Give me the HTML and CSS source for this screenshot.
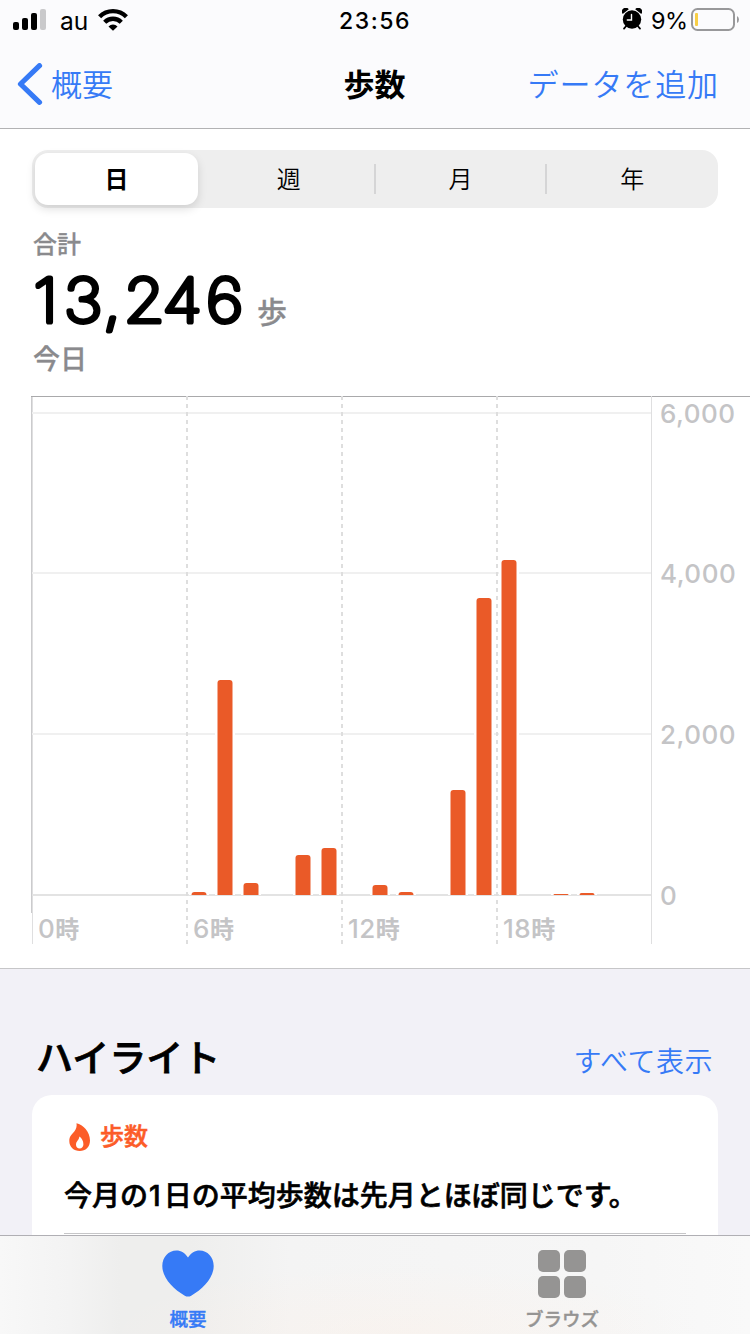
FILE: index.html
```
<!DOCTYPE html>
<html lang="ja">
<head>
    <meta charset="UTF-8">
    <title>歩数</title>
    <link rel="stylesheet" href="styles.css">
</head>
<body>
<div class="header">
    <div class="status">
        <div class="status-left">
            <svg class="signal" width="34" height="22" viewBox="0 0 34 22">
                <rect x="0" y="14" width="6" height="8" rx="2"/>
                <rect x="9" y="10" width="6" height="12" rx="2"/>
                <rect x="18" y="5" width="6" height="17" rx="2"/>
                <rect x="27" y="1" width="6" height="21" rx="2" fill="#c9c9cb"/>
            </svg>
            <span class="carrier">au</span>
            <svg class="wifi" width="30" height="23" viewBox="0 0 30 23">
                <g fill="none" stroke="#000" stroke-width="4.400">
                    <path d="M1.600 8.700a19 19 0 0 1 26.800 0"/>
                    <path d="M6.700 14.200a11.800 11.800 0 0 1 16.600 0"/>
                </g>
                <path d="M10.500 18.400a6.400 6.400 0 0 1 9 0L15 22.800z"/>
            </svg>
        </div>
        <span class="time">23:56</span>
        <div class="status-right">
            <svg class="alarm" width="20" height="22" viewBox="0 0 20 22">
                <circle cx="10" cy="11.500" r="9.200"/>
                <path d="M.7 6A3.800 3.800 0 0 1 6.800 1.300zM19.300 6A3.800 3.800 0 0 0 13.200 1.300z"/>
                <path d="M4.2 18L2 20.6M15.800 18l2.200 2.600" stroke="#000" stroke-width="1.8" stroke-linecap="round"/>
                <path d="M9.500 6.500v5.500H5.300" fill="none" stroke="#fff" stroke-width="1.4" stroke-linecap="round"/>
            </svg>
            <span class="percent">9%</span>
            <svg class="battery" width="48" height="24" viewBox="0 0 48 24">
                <rect x="1" y="1" width="42" height="21" rx="5.5" fill="none" stroke="#98989a" stroke-width="2"/>
                <rect x="4" y="5" width="3" height="13" rx="1" fill="#f8ce46"/>
                <path d="M46 8q2 1 2 3.500t-2 3.500z" fill="#98989a"/>
            </svg>
        </div>
    </div>
    <div class="nav">
        <a class="back" href="javascript:;">
            <svg width="26" height="42" viewBox="0 0 26 42">
                <path d="M22.500 2.700L3.500 21l19 18.300" fill="none" stroke="#367af6" stroke-width="5.200" stroke-linecap="round" stroke-linejoin="round"/>
            </svg>
            <span>概要</span>
        </a>
        <h1>歩数</h1>
        <a class="add" href="javascript:;">データを追加</a>
    </div>
</div>

<div class="panel">
    <ul class="tabs">
        <li class="active">日</li>
        <li>週</li>
        <li>月</li>
        <li>年</li>
    </ul>
    <div class="total">
        <p class="label">合計</p>
        <div class="value">
            <svg width="225" height="77" viewBox="33 262 225 77">
                <text transform="scale(1.1 1)" x="30.5 58.200 93.800 112.400 147.800 187.300" y="322.500">13,246</text>
            </svg>
            <span>歩</span>
        </div>
        <p class="date">今日</p>
    </div>
    <svg class="chart" width="750" height="548" viewBox="0 396 750 548">
        <path class="edge" d="M31 396.500H750"/>
        <path class="side" d="M31.500 397V913"/>
        <path class="line" d="M32.500 397V944M651.500 396V944"/>
        <path class="grid" d="M32 413H651M32 573H651M32 734H651"/>
        <path class="base" d="M32 895H651"/>
        <path class="dash" d="M187 396V944M342 396V944M497 396V944"/>
        <g id="bars"></g>
        <g class="axis">
            <text x="660" y="423">6,000</text>
            <text x="660" y="583">4,000</text>
            <text x="660" y="744">2,000</text>
            <text x="660" y="905">0</text>
            <text x="38" y="938">0<tspan>時</tspan></text>
            <text x="193" y="938">6<tspan>時</tspan></text>
            <text x="348" y="938">12<tspan>時</tspan></text>
            <text x="503" y="938">18<tspan>時</tspan></text>
        </g>
    </svg>
</div>

<div class="highlight">
    <div class="highlight-head">
        <h2>ハイライト</h2>
        <a href="javascript:;">すべて表示</a>
    </div>
    <div class="card">
        <div class="card-title">
            <svg width="22" height="28" viewBox="0 0 22 28">
                <path fill="#fc5c28" fill-rule="evenodd" d="M7.500.2C14 1.500 21 8.500 21 17.500 21 24 16.500 28 10.800 28 4.800 28 .3 24 .3 18 .3 13 3 11.500 5.300 8.500 7.300 6 8 3.200 7.500.2zM10.300 13.500C10.300 17 7 18 7 21.700c0 2.300 1.600 3.800 3.600 3.800 2.300 0 3.800-1.700 3.800-4.200 0-3.500-1.700-6.300-4.100-7.800z"/>
            </svg>
            <span>歩数</span>
        </div>
        <p>今月の<span>1</span>日の平均歩数は先月とほぼ同じです。</p>
    </div>
</div>

<div class="footer">
    <a class="on" href="javascript:;">
        <svg width="52" height="48" viewBox="0 0 52 48">
            <path fill="#367af6" d="M26 7.500C23 3 19 .5 14.500.5 6.500.5.300 7 .300 16c0 12 11 23 22.500 29.700 2 1.200 4.400 1.200 6.400 0C40.700 39 51.700 28 51.700 16 51.700 7 45.500.5 37.500.5 33 .5 29 3 26 7.500z"/>
        </svg>
        <span>概要</span>
    </a>
    <a href="javascript:;">
        <svg width="48" height="48" viewBox="0 0 48 48" fill="#959493">
            <rect width="22" height="22" rx="5"/>
            <rect x="26" width="22" height="22" rx="5"/>
            <rect y="26" width="22" height="22" rx="5"/>
            <rect x="26" y="26" width="22" height="22" rx="5"/>
        </svg>
        <span>ブラウズ</span>
    </a>
</div>

<script type="text/javascript">
    //棒グラフ: [左端, 高さ]
    var data = [[191.5, 3], [217.5, 215], [243.5, 12], [295.5, 40], [321.5, 47], [372.5, 10], [398.5, 3],
        [450.5, 105], [476.5, 297], [501.5, 335], [553.5, 1], [579.5, 2]];
    var bars = document.getElementById("bars"), gap = "", bar = "";

    for (var i = 0; i < data.length; i++) {
        var x = data[i][0], h = data[i][1], y = 895 - h, r = Math.min(3, h);
        //棒の両側は目盛り線を白く抜く
        gap += '<rect class="gap" x="' + (x - 2.5) + '" y="' + (y - 2) + '" width="20" height="' + (h + 2) + '"/>';
        bar += '<path class="bar" d="M' + x + ' 895V' + (y + r) + 'q0 ' + -r + ' ' + r + ' ' + -r +
            'h' + (15 - 2 * r) + 'q' + r + ' 0 ' + r + ' ' + r + 'V895z"/>';
    }
    bars.innerHTML = gap + bar;
</script>
</body>
</html>
```
FILE: styles.css
```
body, div, ul, li, h1, h2, p {
    margin: 0;
    padding: 0;
}

html, body {
    width: 750px;
    height: 1334px;
    overflow: hidden;
}

body {
    display: flex;
    flex-direction: column;
    font-family: Inter, "Noto Sans CJK JP", sans-serif;
    color: #000;
    background: #f2f1f7;
}

a {
    text-decoration: none;
    color: #367af6;
}

li {
    list-style: none;
}

svg {
    display: block;
    flex: none;
}

.header {
    flex: none;
    height: 128px;
    border-bottom: 1px solid #b2b2b4;
    background: #fbfbfd;
}

.status {
    display: grid;
    grid-template-columns: 1fr auto 1fr;
    height: 40px;
    line-height: 42px;
    font-size: 24px;
}

.status-left, .status-right {
    display: flex;
}

.status-left {
    padding-left: 13px;
}

.signal {
    margin-top: 8px;
}

.carrier {
    margin-left: 13px;
    width: 38px;
    font-size: 24.5px;
}

.wifi {
    margin-top: 8px;
}

.time {
    font-weight: 500;
    font-size: 23px;
    letter-spacing: 1.5px;
}

.status-right {
    justify-content: flex-end;
    padding-right: 11px;
}

.alarm {
    margin: 8px 9px 0 0;
}

.percent {
    width: 40px;
    font-size: 23.5px;
    letter-spacing: -.5px;
}

.battery {
    margin-top: 8px;
}

.nav {
    display: grid;
    grid-template-columns: 1fr auto 1fr;
    align-items: center;
    height: 88px;
    padding: 0 32px 0 17px;
    font-size: 31px;
    line-height: 46px;
    font-weight: 350;
}

.back {
    display: flex;
    align-items: center;
    gap: 8px;
}

.back span, .nav h1, .add {
    padding-top: 2px;
}

.nav h1 {
    font-size: 31px;
    font-weight: 700;
    padding-left: 14px;
}

.add {
    text-align: right;
    letter-spacing: .9px;
    margin-right: -1px;
}

.panel {
    flex: none;
    height: 839px;
    border-bottom: 1px solid #c6c6c8;
    background: #fff;
}

.tabs {
    display: flex;
    height: 52px;
    margin: 21px 32px 0;
    padding: 3px 0 3px 3px;
    border-radius: 16px;
    background: #eee;
}

.tabs li {
    flex: 1;
    position: relative;
    line-height: 54px;
    font-size: 24px;
    font-weight: 350;
    text-align: center;
}

.tabs .active {
    flex: 0 0 163px;
    height: 52px;
    margin-right: 5px;
    border-radius: 13px;
    font-weight: 700;
    background: #fff;
    box-shadow: 0 4px 10px rgba(0, 0, 0, .13);
}

.tabs li:nth-child(n+3):before {
    content: "";
    position: absolute;
    left: -1px;
    top: 11px;
    width: 2px;
    height: 30px;
    background: #d5d5d6;
}

.total {
    height: 188px;
    padding-left: 33px;
    color: #8a8a8d;
    font-weight: 500;
    -webkit-text-stroke: .3px #8a8a8d;
}

.label {
    padding-top: 20px;
    font-size: 24px;
    line-height: 34px;
}

.value {
    display: flex;
    height: 77px;
}

/* 細字を丸い線で太らせて角を丸くする */
.value text {
    font-size: 60px;
    font-weight: 100;
    -webkit-text-stroke: 0;
    fill: #000;
    stroke: #000;
    stroke-width: 5.1px;
    stroke-linejoin: round;
}

.value span {
    padding-top: 12px;
    margin-left: -1px;
    font-size: 30px;
    line-height: 77px;
}

.date {
    padding-top: 1px;
    font-size: 27px;
    line-height: 40px;
}

.chart path {
    fill: none;
}

.chart .edge {
    stroke: #a9a9ab;
}

.chart .side {
    stroke: #cbcbcd;
}

.chart .line {
    stroke: #dfdfe0;
}

.chart .grid {
    stroke: #f0f0f0;
    stroke-width: 2;
}

.chart .base {
    stroke: #e3e3e3;
    stroke-width: 2;
}

.chart .dash {
    stroke: #dedede;
    stroke-width: 2;
    stroke-dasharray: 4;
}

.chart .gap {
    fill: #fff;
}

.chart .bar {
    fill: #ea5a28;
}

.axis text {
    fill: #c4c4c6;
    font-size: 26px;
    font-weight: 500;
    letter-spacing: .5px;
}

.axis tspan {
    font-size: 24px;
    font-weight: 700;
}

.highlight {
    flex: 1;
    overflow: hidden;
    padding: 0 32px;
}

.highlight-head {
    display: flex;
    justify-content: space-between;
    align-items: baseline;
    height: 68px;
    padding: 58px 5px 0 4px;
}

.highlight-head h2 {
    font-size: 37px;
    line-height: 64px;
    font-weight: 500;
    -webkit-text-stroke: .8px #000;
}

.highlight-head a {
    font-size: 28px;
    font-weight: 350;
    letter-spacing: .5px;
}

.card {
    height: 200px;
    padding: 24px 32px 0;
    border-radius: 20px;
    background: #fff;
}

.card-title {
    display: flex;
    align-items: center;
    gap: 9px;
    height: 36px;
    padding-left: 5px;
    font-size: 24px;
    line-height: 36px;
    font-weight: 500;
    color: #fc5c28;
    -webkit-text-stroke: .5px #fc5c28;
}

.card p {
    height: 78px;
    line-height: 82px;
    border-bottom: 1px solid #c6c6c8;
    font-size: 28px;
    font-weight: 500;
    -webkit-text-stroke: .6px #000;
    white-space: nowrap;
}

.card p span {
    margin: 0 3px 0 1px;
}

.footer {
    flex: none;
    display: flex;
    height: 98px;
    border-top: 1px solid #b0afb4;
    background: radial-gradient(ellipse 300px 70px at 400px 100%, rgba(253, 240, 230, .4), rgba(253, 240, 230, 0)),
        linear-gradient(90deg, #f8f8f8 0, #f3f3f3 70px, #eeeeed 120px, #eeeeed 190px, #f4f4f4 290px, #f6f6f6 600px, #f9f9f9 750px);
}

.footer a {
    flex: 1;
    display: flex;
    flex-direction: column;
    align-items: center;
    padding: 14px 0 0 1px;
    font-size: 18.5px;
    line-height: 43px;
    font-weight: 500;
    color: #959493;
    -webkit-text-stroke: .4px;
}

.footer a + a {
    padding: 14px 1px 0 0;
}

.footer .on {
    color: #367af6;
}
```
